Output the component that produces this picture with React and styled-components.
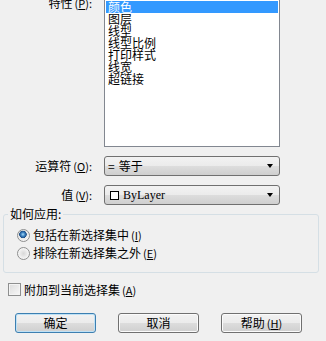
import React from "react";
import styled, { createGlobalStyle } from "styled-components";

const Global = createGlobalStyle`
  html, body { margin: 0; padding: 0; background: #f0f0f0; }
  body {
    font-family: "Noto Sans CJK SC", "Noto Sans", sans-serif;
    font-size: 12px;
    color: #000;
    overflow: hidden;
  }
`;

const Page = styled.div`
  width: 326px;
  height: 341px;
  overflow: hidden;
  display: flex;
  flex-direction: column;
  background: #f0f0f0;
`;

const Form = styled.div`
  display: grid;
  grid-template-columns: 92px 176px;
  column-gap: 12px;
  row-gap: 9px;
  margin-top: -1px;
`;

const Label = styled.div`
  text-align: right;
  line-height: 12px;
  white-space: nowrap;
  align-self: ${(p) => (p.$top ? "start" : "center")};
  margin-top: ${(p) => (p.$top ? "-2px" : "0")};
`;

const Key = styled.span`
  font-size: 11px;
  margin-left: 2px;
  u { text-decoration: underline; text-underline-offset: 1px; }
`;

const ListBox = styled.div`
  box-sizing: border-box;
  height: 148px;
  border: 1px solid #828790;
  background: #fff;
  padding: 1px;
`;

const ListItem = styled.div`
  height: 12px;
  line-height: 12px;
  padding-left: 2px;
  white-space: nowrap;
  background: ${(p) => (p.$selected ? "#3399ff" : "transparent")};
  color: ${(p) => (p.$selected ? "#fff" : "#000")};
`;

const Select = styled.div`
  box-sizing: border-box;
  height: 20px;
  border: 1px solid #707070;
  border-radius: 3px;
  background: linear-gradient(#f2f2f2 0%, #ebebeb 50%, #dddddd 50%, #cfcfcf 100%);
  display: flex;
  align-items: center;
  padding: 0 6px 0 3px;
  gap: 3px;
`;

const SelectText = styled.span`
  flex: 1;
  line-height: 12px;
  white-space: nowrap;
  display: flex;
  align-items: center;
  gap: 4px;
`;

const Latin = styled.span`
  font-family: "Liberation Serif", serif;
  font-size: 12px;
`;

const Swatch = styled.span`
  box-sizing: border-box;
  width: 9px;
  height: 9px;
  border: 1px solid #000;
  background: #fff;
  margin-left: 2px;
`;

const Arrow = styled.span`
  width: 0;
  height: 0;
  border-left: 3.5px solid transparent;
  border-right: 3.5px solid transparent;
  border-top: 4px solid #000;
`;

const Group = styled.fieldset`
  margin: 3px 7px 0 3px;
  padding: 7px 4px 11px;
  border: 1px solid #d5dfe5;
  border-radius: 3px;
  min-width: 0;
`;

const Legend = styled.legend`
  padding: 0 2px;
  line-height: 12px;
  font-size: 12px;
`;

const Options = styled.div`
  display: flex;
  flex-direction: column;
  gap: 2px;
  padding-left: 9px;
`;

const OptionRow = styled.div`
  height: 16px;
  display: flex;
  align-items: center;
  gap: 3px;
  line-height: 12px;
  white-space: nowrap;
`;

const Radio = styled.span`
  box-sizing: border-box;
  width: 13px;
  height: 13px;
  border-radius: 50%;
  border: 1px solid #8e8f8f;
  background: ${(p) =>
    p.$checked
      ? "radial-gradient(circle at 45% 40%, #a6dcf7 0, #3a7fc0 2px, #1d4f86 3.5px, #e6e6e6 4px, #f4f4f4 6px)"
      : "radial-gradient(circle at 50% 50%, #d8d8d8 0, #eeeeee 4px, #fafafa 6px)"};
`;

const CheckRow = styled.div`
  margin: 10px 0 0 8px;
  height: 13px;
  display: flex;
  align-items: center;
  gap: 3px;
  line-height: 12px;
  white-space: nowrap;
`;

const CheckBox = styled.span`
  box-sizing: border-box;
  width: 13px;
  height: 13px;
  border: 1px solid #8e8f8f;
  background: linear-gradient(135deg, #dcdcdc, #f8f8f8);
  box-shadow: inset 0 0 0 1px #f4f4f4;
`;

const Buttons = styled.div`
  margin-top: 17px;
  padding-left: 15px;
  display: flex;
  gap: 22px;
`;

const Button = styled.button`
  box-sizing: border-box;
  width: 81px;
  height: 20px;
  padding: 0;
  border: 1px solid ${(p) => (p.$default ? "#3c7fb1" : "#707070")};
  border-radius: 3px;
  background: linear-gradient(#f2f2f2 0%, #ebebeb 50%, #dddddd 50%, #cfcfcf 100%);
  box-shadow: ${(p) => (p.$default ? "inset 0 0 0 1px #bfe1f5" : "inset 0 0 0 1px #fbfbfb")};
  font-family: inherit;
  font-size: 12px;
  line-height: 12px;
  color: #000;
  display: flex;
  align-items: center;
  justify-content: center;
`;

const items = ["颜色", "图层", "线型", "线型比例", "打印样式", "线宽", "超链接"];

export default function App() {
  return (
    <Page>
      <Global />
      <Form>
        <Label $top>
          特性<Key>(<u>P</u>):</Key>
        </Label>
        <ListBox>
          {items.map((t, i) => (
            <ListItem key={t} $selected={i === 0}>
              {t}
            </ListItem>
          ))}
        </ListBox>

        <Label>
          运算符<Key>(<u>O</u>):</Key>
        </Label>
        <Select>
          <SelectText>
            <span>=</span>
            <span>等于</span>
          </SelectText>
          <Arrow />
        </Select>

        <Label>
          值<Key>(<u>V</u>):</Key>
        </Label>
        <Select>
          <SelectText>
            <Swatch />
            <Latin>ByLayer</Latin>
          </SelectText>
          <Arrow />
        </Select>
      </Form>

      <Group>
        <Legend>如何应用:</Legend>
        <Options>
          <OptionRow>
            <Radio $checked />
            <span>
              包括在新选择集中<Key>(<u>I</u>)</Key>
            </span>
          </OptionRow>
          <OptionRow>
            <Radio />
            <span>
              排除在新选择集之外<Key>(<u>E</u>)</Key>
            </span>
          </OptionRow>
        </Options>
      </Group>

      <CheckRow>
        <CheckBox />
        <span>
          附加到当前选择集<Key>(<u>A</u>)</Key>
        </span>
      </CheckRow>

      <Buttons>
        <Button $default>确定</Button>
        <Button>取消</Button>
        <Button>
          帮助<Key>(<u>H</u>)</Key>
        </Button>
      </Buttons>
    </Page>
  );
}
